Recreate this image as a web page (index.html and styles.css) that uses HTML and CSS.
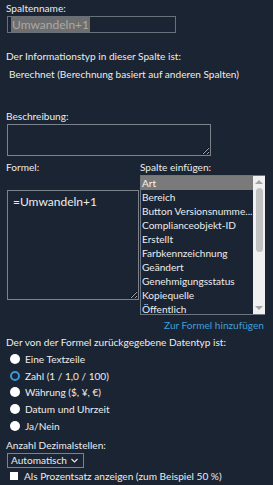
FILE: index.html
```html
<!DOCTYPE html>
<html lang="de">
<head>
  <meta charset="UTF-8" />
  <title>Spalte bearbeiten</title>
  <link rel="stylesheet" href="styles.css">
</head>
<body>
  <div class="panel">
    <!-- Spaltenname -->
    <div class="label">Spaltenname:</div>
    <div class="name-box"><span class="sel">Umwandeln+1</span></div>

    <div class="label info">Der Informationstyp in dieser Spalte ist:</div>
    <div class="type-text">Berechnet (Berechnung basiert auf anderen Spalten)</div>

    <div class="label desc-label">Beschreibung:</div>
    <textarea class="desc-area"></textarea>

    <!-- Formel + Spalte einfügen -->
    <div class="formula-row">
      <div class="formula-col">
        <div class="label">Formel:</div>
        <textarea class="formula-area">=Umwandeln+1</textarea>
      </div>
      <div class="insert-col">
        <div class="label">Spalte einfügen:</div>
        <div class="listbox">
          <ul class="list-items">
            <li class="active">Art</li>
            <li>Bereich</li>
            <li>Button Versionsnumme...</li>
            <li>Complianceobjekt-ID</li>
            <li>Erstellt</li>
            <li>Farbkennzeichnung</li>
            <li>Geändert</li>
            <li>Genehmigungsstatus</li>
            <li>Kopiequelle</li>
            <li>Öffentlich</li>
          </ul>
          <div class="scrollbar">
            <span class="arrow up"></span>
            <span class="thumb"></span>
            <span class="arrow down"></span>
          </div>
        </div>
      </div>
    </div>
    <div class="add-link"><a href="#">Zur Formel hinzufügen</a></div>

    <div class="label">Der von der Formel zurückgegebene Datentyp ist:</div>
    <div class="radios">
      <label class="radio"><input type="radio" name="rtype"> Eine Textzeile</label>
      <label class="radio"><input type="radio" name="rtype" checked> Zahl (1 / 1,0 / 100)</label>
      <label class="radio"><input type="radio" name="rtype"> Währung ($, ¥, €)</label>
      <label class="radio"><input type="radio" name="rtype"> Datum und Uhrzeit</label>
      <label class="radio"><input type="radio" name="rtype"> Ja/Nein</label>
    </div>

    <div class="label decimals">Anzahl Dezimalstellen:</div>
    <div class="select-box">Automatisch
      <svg class="chev" width="7" height="5" viewBox="0 0 7 5"><path d="M0.5 1 L3.5 4 L6.5 1" fill="none" stroke="#e8e8e8" stroke-width="1.1"/></svg>
    </div>
    <label class="check"><input type="checkbox"> Als Prozentsatz anzeigen (zum Beispiel 50 %)</label>
  </div>
</body>
</html>
```

FILE: styles.css
```css
body {
  margin: 0;
  background-color: #1b2432;
  color: #ececec;
  font-family: Lato, "Open Sans", sans-serif;
  font-size: 10.1px;
  line-height: 14px;
  height: 485px;
  overflow: hidden;
}
.panel {
  padding: 1px 8px 0 6px;
}
.label {
  white-space: nowrap;
}
/* Spaltenname input */
.name-box {
  margin: 1px 0 0 1px;
  width: 164px;
  height: 15px;
  border: 1px solid #69707a;
  padding: 0 0 0 3px;
  box-sizing: content-box;
  font-size: 12px;
  line-height: 15px;
}
.sel {
  background: #6e6e6e;
  color: #a9a9a9;
  padding: 0 1px;
}
.info {
  margin-top: 16px;
}
.type-text {
  margin: 4px 0 0 3px;
  white-space: nowrap;
}
.desc-label {
  margin-top: 28px;
}
textarea {
  display: block;
  background: #1b2432;
  color: #ececec;
  border: 1px solid #7b828b;
  font-family: inherit;
  font-size: 12px;
  line-height: 14px;
  margin: 0;
  padding: 2px 4px;
  outline: none;
  box-sizing: border-box;
}
.desc-area {
  margin: 1px 0 0 1px;
  width: 204px;
  height: 32px;
}
.formula-row {
  display: flex;
  margin-top: 4px;
}
.formula-col {
  width: 133px;
}
.formula-area {
  margin: 16px 0 0 1px;
  width: 132px;
  height: 110px;
  padding: 4px 5px;
}
.insert-col {
  margin-left: 1px;
}
.listbox {
  display: flex;
  width: 125px;
  height: 140px;
  border: 1px solid #6e757e;
  border-right: none;
  box-sizing: border-box;
  margin-top: 1px;
}
.list-items {
  list-style: none;
  margin: 0;
  padding: 0;
  flex: 1;
  overflow: hidden;
}
.list-items li {
  height: 14px;
  line-height: 14px;
  padding-left: 1px;
  white-space: nowrap;
  overflow: hidden;
}
.list-items li.active {
  background: #7a7a7a;
  color: #f4f4f4;
}
.scrollbar {
  width: 12px;
  background: #f0f0f0;
  display: flex;
  flex-direction: column;
  align-items: center;
}
.arrow {
  width: 0;
  height: 0;
  border-left: 4px solid transparent;
  border-right: 4px solid transparent;
}
.arrow.up {
  margin-top: 4px;
  border-bottom: 4px solid #a3a3a3;
}
.arrow.down {
  margin-top: auto;
  margin-bottom: 4px;
  border-top: 4px solid #a3a3a3;
}
.thumb {
  width: 7px;
  height: 64px;
  margin-top: 4px;
  background: #c1c1c1;
  border-radius: 4px;
}
.add-link {
  text-align: right;
  margin: 3px 1px 3px 0;
}
.add-link a {
  color: #3f9fd8;
  text-decoration: none;
}
/* Radio group */
.radios {
  margin-top: 2px;
}
.radio {
  display: flex;
  align-items: center;
  gap: 5px;
  height: 16.6px;
  padding-left: 4px;
}
.radio input {
  appearance: none;
  margin: 0;
  width: 10px;
  height: 10px;
  border-radius: 50%;
  background: #ffffff;
}
.radio input:checked {
  background: #1b2432;
  border: 2.5px solid #3b98d8;
  box-sizing: border-box;
}
.decimals {
  margin-top: 4px;
}
.select-box {
  display: flex;
  align-items: center;
  gap: 4px;
  width: fit-content;
  height: 13px;
  margin: 1px 0 0 1px;
  padding: 0 5px 0 3px;
  border: 1px solid #7b828b;
  box-sizing: content-box;
  line-height: 13px;
}
.check {
  display: flex;
  align-items: center;
  gap: 6px;
  padding-left: 4px;
  margin-top: 1px;
  white-space: nowrap;
}
.check input {
  appearance: none;
  margin: 0;
  width: 8px;
  height: 8px;
  background: #ffffff;
}
```
